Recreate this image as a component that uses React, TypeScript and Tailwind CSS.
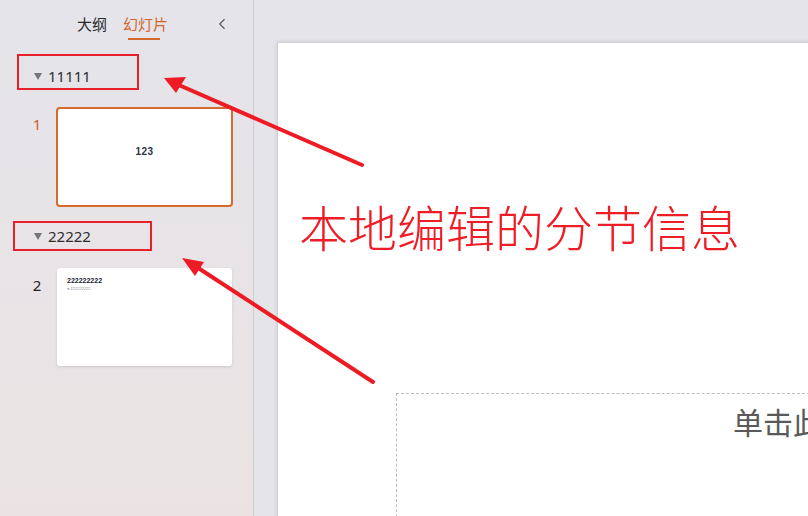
import { ChevronLeft } from "lucide-react";

const sections = [
  { name: "11111", slides: [{ no: 1, active: true }] },
  { name: "22222", slides: [{ no: 2, active: false }] },
];

function Caret() {
  return (
    <svg width="8" height="7" viewBox="0 0 8 7" className="shrink-0">
      <polygon points="0,0 8,0 4,7" fill="#767676" />
    </svg>
  );
}

function Thumb({ active }: { active: boolean }) {
  if (active) {
    return (
      <div className="ml-[-1px] w-[177px] h-[100px] bg-white border-2 border-[#d66a2c] rounded-[4px] flex flex-col items-center pt-[35px]">
        <span className="text-[10px] font-bold text-[#2b3340] font-['Liberation_Sans',sans-serif] tracking-[0.5px]">123</span>
      </div>
    );
  }
  return (
    <div className="w-[175px] h-[98px] bg-white rounded-[3px] shadow-[0_1px_3px_rgba(0,0,0,0.12)] flex flex-col pl-[10px] pt-[9px] gap-[3px]">
      <span className="text-[7px] font-bold text-[#223] leading-none font-['Liberation_Sans',sans-serif]">222222222</span>
      <span className="text-[4px] text-[#8a8fa0] leading-none font-['Liberation_Sans',sans-serif]">● 222222222</span>
    </div>
  );
}

export default function App() {
  return (
    <div className="relative w-[808px] h-[516px] overflow-hidden flex font-['Noto_Sans','Noto_Sans_CJK_SC',sans-serif]">
      {/* left panel */}
      <aside className="w-[254px] shrink-0 h-full bg-gradient-to-b from-[#e4e4ea] to-[#ebe3e3] border-r border-[#cdcdd2] flex flex-col">
        <div className="h-[48px] flex items-center relative">
          <div className="ml-[77px] flex gap-[16px] text-[15px] leading-none">
            <span className="text-[#2a2a2a]">大纲</span>
            <span className="relative text-[#d2682b]">
              幻灯片
              <span className="absolute left-[5px] right-[8px] top-[21px] h-[2px] bg-[#d2682b]" />
            </span>
          </div>
          <ChevronLeft className="ml-auto mr-[22px]" size={18} strokeWidth={1.5} color="#555" />
        </div>

        {sections.map((sec, i) => (
          <div key={sec.name} className={i === 0 ? "mt-[14px]" : "mt-[15px]"}>
            <div className="h-[28px] flex items-center gap-[6px] pl-[34px] text-[15px] text-[#2e2e2e]">
              <Caret />
              <span>{sec.name}</span>
            </div>
            {sec.slides.map((s) => (
              <div key={s.no} className={`flex ${sec.name === "11111" ? "mt-[17px]" : "mt-[18px]"}`}>
                <div className={`w-[57px] pl-[18px] pr-[1px] text-center text-[15px] pt-[6px] ${s.active ? "text-[#c9652b]" : "text-[#222]"}`}>
                  {s.no}
                </div>
                <Thumb active={s.active} />
              </div>
            ))}
          </div>
        ))}
      </aside>

      {/* editing area */}
      <main className="flex-1 h-full bg-[#e5e4e9] pl-[23px] pt-[42px] overflow-hidden">
        <div className="w-[1100px] h-[640px] bg-white border-t border-l border-[#cfcfd4] shadow-[0_0_4px_rgba(0,0,0,0.12)] pl-[118px] pt-[350px]">
          <div className="w-[900px] h-[200px] border border-dashed border-[#bdbdbd] pl-[336px] pt-[12px]">
            <span className="text-[30px] leading-none text-[#595959] font-['Noto_Sans_CJK_SC',sans-serif] whitespace-nowrap">单击此处添加副标题</span>
          </div>
        </div>
      </main>

      {/* annotation overlay */}
      <div className="absolute left-[17px] top-[54px] w-[122px] h-[36px] border-2 border-[#e8202a]" />
      <div className="absolute left-[13px] top-[221px] w-[139px] h-[30px] border-2 border-[#e8202a]" />
      <div className="absolute left-[299px] top-[201px] text-[49px] leading-none font-light text-[#ee1d26] whitespace-nowrap font-['Noto_Sans_CJK_SC',sans-serif]">
        本地编辑的分节信息
      </div>
      <svg className="absolute inset-0 pointer-events-none" width="808" height="516">
        <line x1="362" y1="165" x2="172" y2="82" stroke="#ed1c24" strokeWidth="4" strokeLinecap="round" />
        <polygon points="164,78 186,77 176,93" fill="#ed1c24" />
        <line x1="373" y1="382" x2="189" y2="262" stroke="#ed1c24" strokeWidth="4" strokeLinecap="round" />
        <polygon points="182,258 204,262 195,276" fill="#ed1c24" />
      </svg>
    </div>
  );
}
